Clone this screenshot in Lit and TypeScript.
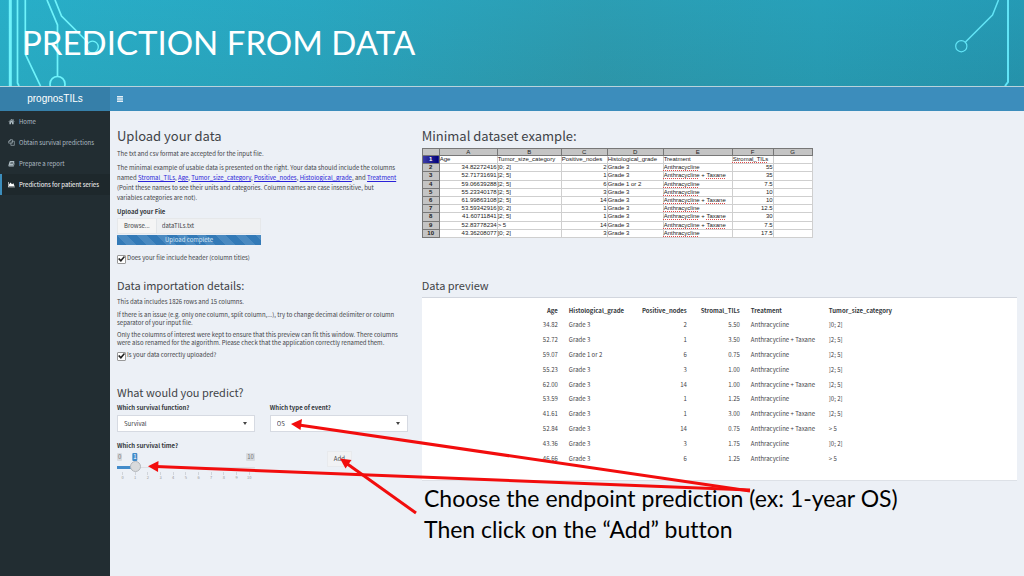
import { LitElement, html, css, svg } from "lit";
import { customElement, state } from "lit/decorators.js";

interface SheetRow {
  age: string;
  size: string;
  nodes: string;
  grade: string;
  treatment: string[];
  tils: string;
}

const A = ["Anthracycline"];
const AT = ["Anthracycline", "Taxane"];

const SHEET: SheetRow[] = [
  { age: "34.82272416", size: "]0; 2]", nodes: "2", grade: "Grade 3", treatment: A, tils: "55" },
  { age: "52.71731691", size: "]2; 5]", nodes: "1", grade: "Grade 3", treatment: AT, tils: "35" },
  { age: "59.06639288", size: "]2; 5]", nodes: "6", grade: "Grade 1 or 2", treatment: A, tils: "7.5" },
  { age: "55.23340178", size: "]2; 5]", nodes: "3", grade: "Grade 3", treatment: A, tils: "10" },
  { age: "61.99863108", size: "]2; 5]", nodes: "14", grade: "Grade 3", treatment: AT, tils: "10" },
  { age: "53.59342916", size: "]0; 2]", nodes: "1", grade: "Grade 3", treatment: A, tils: "12.5" },
  { age: "41.60711841", size: "]2; 5]", nodes: "1", grade: "Grade 3", treatment: AT, tils: "30" },
  { age: "52.83778234", size: "> 5", nodes: "14", grade: "Grade 3", treatment: AT, tils: "7.5" },
  { age: "43.36208077", size: "]0; 2]", nodes: "3", grade: "Grade 3", treatment: A, tils: "17.5" },
];

const PREVIEW: string[][] = [
  ["34.82", "Grade 3", "2", "5.50", "Anthracycline", "]0; 2]"],
  ["52.72", "Grade 3", "1", "3.50", "Anthracycline + Taxane", "]2; 5]"],
  ["59.07", "Grade 1 or 2", "6", "0.75", "Anthracycline", "]2; 5]"],
  ["55.23", "Grade 3", "3", "1.00", "Anthracycline", "]2; 5]"],
  ["62.00", "Grade 3", "14", "1.00", "Anthracycline + Taxane", "]2; 5]"],
  ["53.59", "Grade 3", "1", "1.25", "Anthracycline", "]0; 2]"],
  ["41.61", "Grade 3", "1", "3.00", "Anthracycline + Taxane", "]2; 5]"],
  ["52.84", "Grade 3", "14", "0.75", "Anthracycline + Taxane", "> 5"],
  ["43.36", "Grade 3", "3", "1.75", "Anthracycline", "]0; 2]"],
  ["46.66", "Grade 3", "6", "1.25", "Anthracycline", "> 5"],
];

const ICONS = {
  home: svg`<path d="M8 2 L1 8.4 L2 9.4 L8 4 L14 9.4 L15 8.4 L12.6 6.2 V2.8 H10.8 V4.6 Z M3.2 9.4 V14 H6.8 V10.4 H9.2 V14 H12.8 V9.4 L8 5.1 Z"/>`,
  copy: svg`<path fill="none" stroke="currentColor" stroke-width="1.4" d="M5.5 4.5 V1.5 H10 V9.5 H1.5 V5.2 L5.2 1.5 M1.5 5.2 H5.2 M10 5 H14.5 V14.5 H6.5 V9.5 M6.8 8.6 L10 5"/>`,
  book: svg`<path d="M5 2 H14.6 L12 12.4 H3.2 Q2 12.6 2.6 13.4 H12.6 L15 5 Q16 6 15.4 7 L13.4 14 Q13 15 12 15 H2.6 Q0.4 14.6 1 12 L3.4 4 Q4 2 5 2 Z M6 4.6 L5.7 5.6 H11.6 L11.9 4.6 Z M5.3 7 L5 8 H11 L11.3 7 Z" fill-rule="evenodd"/>`,
  area: svg`<path d="M0 2 H1.4 V13 H16 V14.4 H0 Z M2.4 12 V8 L5.6 3.6 L9.2 7.4 L12.4 5 L15 12 Z"/>`,
};

@customElement("app-root")
export class AppRoot extends LitElement {
  static styles = css`
    :host {
      display: block;
      font-family: "Noto Sans CJK SC", "Noto Sans", sans-serif;
      font-size: 6px;
      line-height: 10px;
      color: #3f4347;
    }
    * { box-sizing: border-box; }
    h1, h2, h3, p, ul { margin: 0; padding: 0; font-weight: 400; }
    .slide { position: relative; display: flex; flex-direction: column; min-height: 100vh; background: #ecf0f6; }
    .banner {
      position: relative;
      display: flex;
      align-items: center;
      height: 87px;
      padding: 0 22px 2px;
      border-bottom: 1px solid #b9d3dc;
      background:
        linear-gradient(180deg, rgba(30, 170, 200, 0.25), rgba(20, 120, 140, 0.12)),
        linear-gradient(90deg, #2bb0c8 0%, #2ca6bf 30%, #3099ac 58%, #2a9db4 80%, #2795ae 100%);
    }
    .banner h1 {
      position: relative;
      font-family: Lato, sans-serif;
      font-size: 33px;
      line-height: 40px;
      color: #fff;
      white-space: nowrap;
    }
    .trace { position: absolute; top: 0; height: 86px; }
    .trace.left { left: 0; width: 110px; }
    .trace.right { right: 0; width: 84px; }
    .topbar { display: flex; height: 24px; background: #3c8dbc; color: #fff; }
    .brand {
      width: 110px;
      text-align: center;
      font: 10px/24px "Liberation Sans", sans-serif;
      background: #367fa9;
    }
    .toggle { display: flex; align-items: center; padding: 0 7px; border: 0; background: none; color: #e4f0f7; }
    .toggle svg { width: 6px; height: 6px; }
    .body { flex: 1; display: flex; }
    .sidebar { width: 110px; background: #222d32; }
    .sidebar ul { list-style: none; }
    .sidebar a {
      display: flex;
      align-items: center;
      gap: 4px;
      height: 21px;
      padding-left: 6px;
      border-left: 2px solid transparent;
      color: #aebcc3;
      text-decoration: none;
      white-space: nowrap;
    }
    .sidebar a.active { color: #fff; background: #1e282c; border-left-color: #3c8dbc; }
    .sidebar svg { width: 7px; height: 7px; fill: currentColor; flex: none; }
    .content {
      flex: 1;
      display: grid;
      grid-template-columns: 1fr 2fr;
      grid-template-rows: auto 1fr;
      padding-top: 15px;
      row-gap: 14px;
      min-width: 0;
    }
    .cell { padding: 0 7px; min-width: 0; }
    h2 { font-size: 13px; line-height: 20px; }
    h3 { font-size: 11px; line-height: 17px; }
    .intro { margin-top: 3px; }
    .intro + .intro { margin-top: 4px; }
    .intro a { color: #2a22d8; text-decoration: underline; }
    .tight { line-height: 8px; margin-top: 4px; }
    .label { display: block; font-weight: 700; color: #33373b; line-height: 10px; }
    .upload { width: 144px; margin-top: 4px; }
    .file { display: flex; height: 16px; margin-top: 1px; border: 1px solid #e6e8ea; background: #eef0f2; }
    .browse {
      display: flex;
      align-items: center;
      padding: 0 6px;
      background: #f5f5f5;
      border-right: 1px solid #e2e5e8;
      white-space: nowrap;
    }
    .picker { position: absolute; width: 1px; height: 1px; opacity: 0; }
    .filename { flex: 1; min-width: 0; border: 0; padding: 0 5px; background: none; font: inherit; color: inherit; }
    .progress {
      height: 10px;
      margin-top: 1px;
      text-align: center;
      color: #d6e6f4;
      background: repeating-linear-gradient(45deg, #337ab7 0 7px, #4a8ac1 7px 14px);
    }
    .check { display: flex; align-items: center; gap: 1px; height: 10px; }
    .check input {
      appearance: none;
      display: grid;
      place-items: center;
      width: 9px;
      height: 9px;
      margin: 2px 0 0;
      border: 1px solid #999;
      border-radius: 1px;
      background: #fff;
    }
    .check input:checked::before {
      content: "";
      width: 7px;
      height: 6px;
      background: #222;
      clip-path: polygon(0 50%, 20% 35%, 40% 60%, 85% 0, 100% 15%, 42% 100%);
    }
    .header-check { margin-top: 8px; }
    .upload-check { margin-top: 3px; }
    .predict { margin: 24px 0 2px; }
    .pair { display: grid; grid-template-columns: 1fr 1fr; column-gap: 15px; }
    .select { position: relative; display: block; margin-top: 2px; }
    .select select {
      appearance: none;
      display: block;
      width: 100%;
      height: 17px;
      padding: 0 6px;
      border: 1px solid #d6dae2;
      border-radius: 0;
      background: #fff;
      font: inherit;
      color: inherit;
    }
    .select::after {
      content: "";
      position: absolute;
      right: 8px;
      top: 7px;
      border: 2px solid transparent;
      border-top: 3px solid #444;
      border-bottom: 0;
    }
    .time { margin-top: 9px; align-items: start; }
    .slider { position: relative; margin-top: 2px; }
    .bounds { display: flex; justify-content: space-between; height: 8px; }
    .bound, .bubble { padding: 0 1px; line-height: 8px; border-radius: 1px; }
    .bound { background: #d8dbe0; color: #777; }
    .bubble { position: absolute; top: 0; transform: translateX(-50%); background: #428bca; color: #fff; }
    .slider input {
      appearance: none;
      display: block;
      width: 100%;
      height: 11px;
      margin: 0;
      background: linear-gradient(#428bca, #428bca) 0 5px / 18px 3px no-repeat,
        linear-gradient(#dcdfe4, #dcdfe4) 0 6px / 100% 1px no-repeat;
    }
    .slider input::-webkit-slider-thumb {
      appearance: none;
      width: 11px;
      height: 11px;
      border: 1px solid #b4b7bb;
      border-radius: 50%;
      background: #d9dadc;
    }
    .ticks { display: flex; justify-content: space-between; padding: 0 3px; font-size: 4px; line-height: 5px; color: #999; }
    .tick { width: 5px; text-align: center; }
    .tick::before { content: ""; display: block; width: 1px; height: 3px; margin: 0 auto; background: #d0d4da; }
    .add {
      justify-self: start;
      margin: 10px 0 0 57px;
      height: 16px;
      padding: 0 6px;
      border: 1px solid #e8eaed;
      background: #f1f2f4;
      font: inherit;
      color: inherit;
    }
    .sheet {
      width: 391px;
      height: 90px;
      margin-top: 2px;
      table-layout: fixed;
      border-collapse: collapse;
      background: #fff;
      font: 6px/7px "Liberation Sans", sans-serif;
      color: #222;
    }
    .sheet th, .sheet td { height: 8px; padding: 0; border: 1px solid #cfcfcf; white-space: nowrap; text-align: left; }
    .sheet .letter, .sheet .line {
      text-align: center;
      font-weight: 400;
      background: #c4c4c4;
      border-color: #777;
    }
    .sheet .line { font-weight: 700; }
    .sheet .letter { height: 7px; line-height: 6px; }
    .sheet .current { background: linear-gradient(90deg, #3f3fa8, #00007c); color: #fff; }
    .sheet .num { text-align: right; }
    .spell { text-decoration: underline dotted #e04a4a 1px; text-underline-offset: 1px; text-decoration-skip-ink: none; }
    .c-line { width: 17px; }
    .c-age { width: 58px; }
    .c-size { width: 64px; }
    .c-nodes { width: 46px; }
    .c-grade { width: 56px; }
    .c-treat { width: 69px; }
    .c-tils { width: 41px; }
    .panel {
      margin-top: 3px;
      padding: 5px 0 14px;
      background: #fff;
      border-top: 1px solid #d2d6de;
      border-bottom: 1px solid #dde1e7;
    }
    .preview { width: 363px; height: 163px; margin: 0 auto; table-layout: fixed; border-collapse: collapse; }
    .preview th, .preview td { padding: 0 6px 0 5px; text-align: left; white-space: nowrap; }
    .preview th { height: 15px; color: #33373b; }
    .preview .num { text-align: right; }
    .p-age { width: 26px; }
    .p-grade { width: 70px; }
    .p-nodes { width: 59px; }
    .p-tils { width: 53px; }
    .p-treat { width: 78px; }
    .arrows { position: absolute; left: 0; top: 0; width: 1024px; height: 576px; pointer-events: none; }
    .note {
      position: absolute;
      left: 424px;
      top: 483px;
      font: 23px/31px Lato, sans-serif;
      font-variant-ligatures: none;
      color: #000;
      white-space: nowrap;
    }
  `;

  @state() private years = 1;

  private link(icon: unknown, text: string, active = false) {
    return html`<li>
      <a href="#" class=${active ? "active" : ""}><svg viewBox="0 0 16 16" aria-hidden="true">${icon}</svg>${text}</a>
    </li>`;
  }

  private sheet() {
    return html`<table class="sheet">
      <colgroup>
        <col class="c-line" /><col class="c-age" /><col class="c-size" /><col class="c-nodes" />
        <col class="c-grade" /><col class="c-treat" /><col class="c-tils" /><col />
      </colgroup>
      <thead>
        <tr>
          <th class="letter"></th>
          ${["A", "B", "C", "D", "E", "F", "G"].map((l) => html`<th class="letter">${l}</th>`)}
        </tr>
      </thead>
      <tbody>
        <tr>
          <th class="line current">1</th>
          <td>Age</td><td>Tumor_size_category</td><td>Positive_nodes</td><td>Histological_grade</td>
          <td>Treatment</td><td><span class="spell">Stromal_TILs</span></td><td></td>
        </tr>
        ${SHEET.map((r, i) => html`<tr>
          <th class="line">${i + 2}</th>
          <td class="num">${r.age}</td>
          <td>${r.size}</td>
          <td class="num">${r.nodes}</td>
          <td>${r.grade}</td>
          <td>${r.treatment.map((t, k) => html`${k ? " + " : ""}<span class="spell">${t}</span>`)}</td>
          <td class="num">${r.tils}</td>
          <td></td>
        </tr>`)}
      </tbody>
    </table>`;
  }

  private preview() {
    const heads = ["Age", "Histological_grade", "Positive_nodes", "Stromal_TILs", "Treatment", "Tumor_size_category"];
    const cls = (i: number) => (i === 0 || i === 2 || i === 3 ? "num" : "");
    return html`<table class="preview">
      <colgroup>
        <col class="p-age" /><col class="p-grade" /><col class="p-nodes" /><col class="p-tils" /><col class="p-treat" /><col />
      </colgroup>
      <thead><tr>${heads.map((h, i) => html`<th class=${cls(i)}>${h}</th>`)}</tr></thead>
      <tbody>
        ${PREVIEW.map((r) => html`<tr>${r.map((c, i) => html`<td class=${cls(i)}>${c}</td>`)}</tr>`)}
      </tbody>
    </table>`;
  }

  render() {
    return html`<div class="slide">
      <header class="banner">
        <svg class="trace left" viewBox="0 0 110 86" fill="none" stroke="#6ff3fb" stroke-width="1.7" aria-hidden="true">
          <path stroke-width="3" d="M10.3 0 V86" />
          <path d="M17.5 0 V83 L19 86 M25.3 0 V54 L40.5 86 M47 0 L57.5 25 V76 M55 0 L61.5 16 L88 42.5" />
          <circle cx="57.5" cy="84" r="7.5" />
          <circle cx="92.5" cy="47" r="5.8" stroke-width="1.3" />
        </svg>
        <svg class="trace right" viewBox="0 0 84 86" fill="none" stroke="#62e4f6" stroke-width="1.5" aria-hidden="true">
          <path d="M25.5 42 L52.5 15 L58.5 0" />
          <path stroke-width="2" d="M68 0 V82 L65 86" />
          <circle cx="21.3" cy="46.2" r="5.6" stroke-width="1.2" />
        </svg>
        <h1>PREDICTION FROM DATA</h1>
      </header>
      <div class="topbar">
        <div class="brand">prognosTILs</div>
        <button class="toggle" aria-label="Toggle navigation">
          <svg viewBox="0 0 6 6" fill="currentColor"><path d="M0 0H6V1.5H0Z M0 2.2H6V3.7H0Z M0 4.4H6V5.9H0Z" /></svg>
        </button>
      </div>
      <div class="body">
        <nav class="sidebar">
          <ul>
            ${this.link(ICONS.home, "Home")}
            ${this.link(ICONS.copy, "Obtain survival predictions")}
            ${this.link(ICONS.book, "Prepare a report")}
            ${this.link(ICONS.area, "Predictions for patient series", true)}
          </ul>
        </nav>
        <main class="content">
          <section class="cell">
            <h2>Upload your data</h2>
            <p class="intro">The txt and csv format are accepted for the input file.</p>
            <p class="intro">
              The minimal example of usable data is presented on the right. Your data should include the columns<br />
              named <a href="#">Stromal_TILs</a>, <a href="#">Age</a>, <a href="#">Tumor_size_category</a>,
              <a href="#">Positive_nodes</a>, <a href="#">Histological_grade</a>, and <a href="#">Treatment</a><br />
              (Point these names to see their units and categories. Column names are case insensitive, but<br />
              variables categories are not).
            </p>
            <div class="upload">
              <label class="label" for="file">Upload your File</label>
              <div class="file">
                <label class="browse">Browse...<input class="picker" id="file" type="file" /></label>
                <input class="filename" type="text" readonly aria-label="Selected file" value="dataTILs.txt" />
              </div>
              <div class="progress" role="progressbar" aria-valuenow="100">Upload complete</div>
            </div>
            <label class="check header-check"><input type="checkbox" checked />Does your file include header (column titles)</label>
          </section>
          <section class="cell">
            <h2>Minimal dataset example:</h2>
            ${this.sheet()}
          </section>
          <section class="cell">
            <h3>Data importation details:</h3>
            <p class="intro">This data includes 1826 rows and 15 columns.</p>
            <p class="tight">
              If there is an issue (e.g. only one column, split column,...), try to change decimal delimiter or column<br />
              separator of your input file.
            </p>
            <p class="tight">
              Only the columns of interest were kept to ensure that this preview can fit this window. There columns<br />
              were also renamed for the algorithm. Please check that the application correctly renamed them.
            </p>
            <label class="check upload-check"><input type="checkbox" checked />Is your data correctly uploaded?</label>
            <h3 class="predict">What would you predict?</h3>
            <div class="pair">
              <div>
                <label class="label" for="fn">Which survival function?</label>
                <span class="select"><select id="fn"><option>Survival</option></select></span>
              </div>
              <div>
                <label class="label" for="ev">Which type of event?</label>
                <span class="select"><select id="ev"><option>OS</option></select></span>
              </div>
            </div>
            <div class="pair time">
              <div>
                <label class="label" for="time">Which survival time?</label>
                <div class="slider">
                  <div class="bounds"><span class="bound">0</span><span class="bound">10</span></div>
                  <span class="bubble" style="left:${4 + this.years * 9}%">${this.years}</span>
                  <input
                    id="time" type="range" min="0" max="10" .value=${String(this.years)}
                    @input=${(e: Event) => (this.years = Number((e.target as HTMLInputElement).value))}
                  />
                  <div class="ticks">${Array.from({ length: 11 }, (_, i) => html`<span class="tick">${i}</span>`)}</div>
                </div>
              </div>
              <button class="add">Add</button>
            </div>
          </section>
          <section class="cell">
            <h3>Data preview</h3>
            <div class="panel">${this.preview()}</div>
          </section>
        </main>
      </div>
      <svg class="arrows" viewBox="0 0 1024 576" aria-hidden="true">
        <g stroke="#f20d0d" stroke-width="3">
          <path d="M750 491 L299 425" />
          <path d="M750 490 L156 466.5" />
          <path d="M416 513 L346 463" />
        </g>
        <g fill="#f20d0d">
          <path d="M291 424 L302 419 L300.500 430 Z" />
          <path d="M148 466.2 L158.5 461 L158 472 Z" />
          <path d="M340 458.5 L351.5 460 L345.5 468.5 Z" />
        </g>
      </svg>
      <p class="note">Choose the endpoint prediction (ex: 1-year OS)<br />Then click on the “Add” button</p>
    </div>`;
  }
}
